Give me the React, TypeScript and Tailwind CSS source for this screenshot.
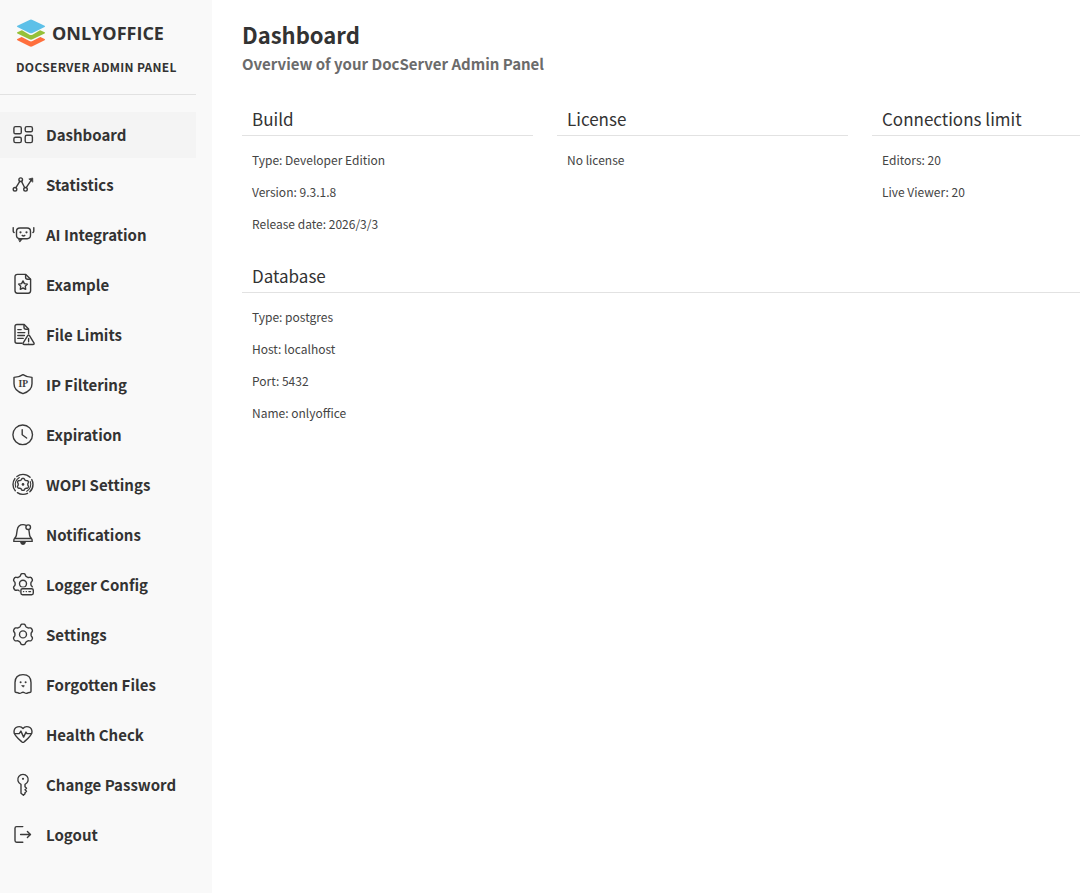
import type { ReactNode } from "react";

function Icon({ children }: { children: ReactNode }) {
  return (
    <svg
      viewBox="0 0 24 24"
      className="size-6 shrink-0 text-[#3a3a3a]"
      fill="none"
      stroke="currentColor"
      strokeWidth="1.4"
      strokeLinecap="round"
      strokeLinejoin="round"
      aria-hidden="true"
    >
      {children}
    </svg>
  );
}

// Closed outline of a six-lobed gear; depth is the height of a lobe above the mean radius.
function gear(cx: number, cy: number, radius: number, depth: number) {
  const points = Array.from({ length: 96 }, (_, i) => {
    const a = (i / 96) * Math.PI * 2;
    const wave = Math.tanh(1.8 * Math.cos(6 * a)) / Math.tanh(1.8);
    const r = radius + depth * wave;
    return `${(cx + r * Math.sin(a)).toFixed(2)} ${(cy - r * Math.cos(a)).toFixed(2)}`;
  });
  return `M${points.join("L")}Z`;
}

const items: { label: string; icon: ReactNode }[] = [
  {
    label: "Dashboard",
    icon: (
      <>
        <rect x="2.9" y="3.6" width="7.4" height="7.2" rx="1.6" />
        <rect x="14.2" y="3.6" width="7.2" height="5.2" rx="1.6" />
        <rect x="2.9" y="14.2" width="7.4" height="5.4" rx="1.6" />
        <rect x="14.2" y="12.3" width="7.2" height="7.3" rx="1.6" />
      </>
    ),
  },
  {
    label: "Statistics",
    icon: (
      <>
        <circle cx="4" cy="16.3" r="1.8" />
        <circle cx="9.7" cy="6.7" r="1.8" />
        <circle cx="14.5" cy="16.3" r="1.8" />
        <path d="M4.9 14.7 8.8 8.3M10.5 8.4l3.2 6.3M15.2 14.6 20.6 6.6" />
        <path d="M18.2 5.9 21.7 5l.1 3.8z" fill="currentColor" strokeWidth="0.8" />
      </>
    ),
  },
  {
    label: "AI Integration",
    icon: (
      <>
        <rect x="5.5" y="5" width="14" height="10.7" rx="3.4" />
        <path d="M7.9 16.2h3.2L9 18.8z" fill="currentColor" strokeWidth="0.8" />
        <path d="M2.2 4.6v3.6q.1 1 .9 1.3M22.8 4.6v3.6q-.1 1-.9 1.3" />
        <path d="M11.2 12.4q1.3 1.1 2.6 0" />
        <circle cx="9.5" cy="9.3" r="1.1" fill="currentColor" stroke="none" />
        <circle cx="15.5" cy="9.3" r="1.1" fill="currentColor" stroke="none" />
      </>
    ),
  },
  {
    label: "Example",
    icon: (
      <>
        <path d="M6.4 1.4h8.4l4.8 4.8v11.6q0 2.4-2.4 2.4H6.4Q4 20.2 4 17.8v-14q0-2.4 2.4-2.4z" />
        <path d="M14.6 1.6v2.6q0 2 2 2h2.8" />
        <path d="m12 7.9 1.4 2.7 3 .5-2.1 2.2.4 3-2.7-1.3-2.7 1.3.4-3-2.1-2.2 3-.5z" />
      </>
    ),
  },
  {
    label: "File Limits",
    icon: (
      <>
        <path d="M11 20.3H6q-2 0-2-2V3.5q0-2 2-2h7.2L17.6 6v4.6" />
        <path d="M13 1.7v2.5q0 2 2 2h2.4M6.8 6.6h3.4M6.8 9.6h7M6.8 12.5h6.6M6.8 15.4h5.4" />
        <path d="M16.7 12.6q.9-1.3 1.8 0l4.4 7.2q.7 1.6-1 1.7h-8.7q-1.6-.1-1-1.7zM17.6 15.4v3" />
        <circle cx="17.6" cy="20" r="0.6" fill="currentColor" stroke="none" />
      </>
    ),
  },
  {
    label: "IP Filtering",
    icon: (
      <>
        <path d="M12 1.6q4 2.7 9 2.8v6.4q0 7-9 9.9-9-2.9-9-9.9V4.4q5-.1 9-2.8z" />
        <text
          x="12.2"
          y="14"
          textAnchor="middle"
          fontSize="9.5"
          fontWeight="700"
          fontFamily="Liberation Serif, serif"
          fill="currentColor"
          stroke="none"
        >
          IP
        </text>
      </>
    ),
  },
  {
    label: "Expiration",
    icon: (
      <>
        <circle cx="11.7" cy="11.8" r="9.8" />
        <path d="M11.2 6.6v5.2l4.4 3.2" />
      </>
    ),
  },
  {
    label: "WOPI Settings",
    icon: (
      <>
        <circle
          cx="12"
          cy="11.4"
          r="10"
          pathLength="100"
          strokeDasharray="21 4.5 17 4.5 21 4.5 23 4.5"
          strokeDashoffset="8"
        />
        <path d="M4.7 14.2a7.9 7.9 0 0 1 3.6-9.7M19.3 8.6a7.9 7.9 0 0 1-3.6 9.7" strokeWidth="1.1" />
        <path d={gear(12, 11.4, 5.4, 0.6)} />
        <circle cx="12" cy="11.4" r="1.3" fill="currentColor" stroke="none" />
      </>
    ),
  },
  {
    label: "Notifications",
    icon: (
      <>
        <path d="M14.8 2.3Q13.8 1.6 12 1.6 7 1.6 6.2 7l-.8 5.2q-.2 1.6-1.6 2.9-1.2 1.2-1 3.3h18.4q.2-2.1-1-3.3-1.4-1.3-1.6-2.9L17.9 7M3.6 15.5h16.8" />
        <circle cx="17.2" cy="4.2" r="2.3" />
        <path d="M9.8 19.2q.3 2 2.2 2t2.2-2z" fill="currentColor" />
      </>
    ),
  },
  {
    label: "Logger Config",
    icon: (
      <>
        <path d={gear(12, 10.8, 9.1, 1.2)} />
        <circle cx="12" cy="10.8" r="3.5" />
        <rect x="8.6" y="14.4" width="15.4" height="8.6" fill="#f9f9f9" stroke="none" />
        <rect x="9.9" y="15.7" width="12.4" height="6" rx="1.6" />
        <path d="M12.5 18.6h.2M15.2 18.6h.2M17.9 18.6h1.6" />
      </>
    ),
  },
  {
    label: "Settings",
    icon: (
      <>
        <path d={gear(12, 11.4, 9.2, 1.1)} />
        <circle cx="12" cy="11.4" r="3.5" />
      </>
    ),
  },
  {
    label: "Forgotten Files",
    icon: (
      <>
        <path d="M4 18.2V9.6C4 4.2 7.4 1.6 12 1.6s8 2.6 8 8v8.6q-.1 1.5-1.6 1.3c-1.3-.2-1.7.9-3.1.9-1.5 0-1.9-1.2-3.3-1.2s-1.8 1.2-3.3 1.2c-1.4 0-1.8-1.1-3.1-.9Q4.1 19.7 4 18.2z" />
        <circle cx="9.6" cy="9.3" r="1" fill="currentColor" stroke="none" />
        <circle cx="14.6" cy="9.3" r="1" fill="currentColor" stroke="none" />
        <path d="M11 12.6h2.3q-.1 1.4-1.1 1.4T11 12.6z" fill="currentColor" strokeWidth="0.6" />
      </>
    ),
  },
  {
    label: "Health Check",
    icon: (
      <>
        <path d="M12 5.5C9.6 2.4 3 3 3 9c0 3.2 3 5.6 8 10q1 .8 2 0c5-4.4 8-6.8 8-10 0-6-6.6-6.6-9-3.5z" />
        <path d="M3.4 10.6h4.8l1.7-2.5 2.7 6 2.4-5 1 1.5h4.6" />
      </>
    ),
  },
  {
    label: "Change Password",
    icon: (
      <>
        <path d="M10 11.4a5.2 5.2 0 1 1 4 0v2.4l1.5 1.5-1.5 1.5 1.5 1.5-1.5 1.5v.9l-1.6 1.5L10 20.3z" />
        <circle cx="12" cy="5.8" r="1.1" fill="currentColor" stroke="none" />
      </>
    ),
  },
  {
    label: "Logout",
    icon: (
      <path d="M11.8 3.6H5.6Q4 3.600 4 5.200v12.400q0 1.600 1.600 1.600h6.200M9.600 11.500h9.800M16.400 8.400l3.100 3.100-3.100 3.100" />
    ),
  },
];

function Section({ title, rows, wide }: { title: string; rows: string[]; wide?: boolean }) {
  return (
    <section className={wide ? "col-span-3" : ""}>
      <h2 className="border-b border-[#e2e2e2] px-[10px] pb-1 text-[17px] leading-6 text-[#333333]">{title}</h2>
      <div className="flex flex-col gap-3 px-[10px] pt-[14px] text-[12px] leading-5 text-[#444444]">
        {rows.map((row) => (
          <p key={row}>{row}</p>
        ))}
      </div>
    </section>
  );
}

export default function App() {
  return (
    <div className="flex min-h-screen overflow-x-hidden bg-white font-['Noto_Sans_CJK_SC',sans-serif] text-[#333333]">
      <aside className="w-[212px] shrink-0 bg-[#f9f9f9] pr-4">
        <header className="border-b border-[#e2e2e2] px-4 pt-[18px] pb-[17px]">
          <div className="flex items-center gap-[6px]">
            <svg viewBox="0 0 30 30" className="size-[30px]" aria-hidden="true">
              <path d="M1.4 21 15 14.5 28.6 21q1 .6 0 1.2L16.5 28.3q-1.5.8-3 0L1.4 22.2q-1-.6 0-1.2z" fill="#ff6f3d" />
              <path d="M1.4 15.6 15 9.3l13.6 6.3q1 .6 0 1.2l-12.1 6.3q-1.5.8-3 0L1.4 16.8q-1-.6 0-1.2z" fill="#f9f9f9" />
              <path d="M1.4 14.2 15 7.9l13.6 6.3q1 .6 0 1.2l-12.1 5.9q-1.5.8-3 0L1.4 15.4q-1-.6 0-1.2z" fill="#95c038" />
              <path d="M1.4 9.4h27.2L16.5 16.7q-1.5.8-3 0z" fill="#f9f9f9" />
              <path d="M1.4 7.8 13.5 1.9q1.5-.7 3 0l12.1 5.9q1 .6 0 1.2l-12.1 6q-1.5.7-3 0L1.4 9q-1-.6 0-1.2z" fill="#5dc0e8" />
            </svg>
            <span className="font-['Open_Sans',sans-serif] text-[18px] leading-[30px] font-bold">ONLYOFFICE</span>
          </div>
          <p className="mt-[9px] text-[12px] leading-5 font-bold tracking-wide">DOCSERVER ADMIN PANEL</p>
        </header>
        <nav aria-label="Main" className="flex flex-col gap-1 pt-[17px]">
          {items.map(({ label, icon }, i) => (
            <a
              key={label}
              href="#"
              aria-current={i === 0 ? "page" : undefined}
              className={
                i === 0
                  ? "flex h-[46px] items-center gap-[11px] bg-[#f4f4f4] pl-[11px] text-[15px] font-bold"
                  : "flex h-[46px] items-center gap-[11px] pl-[11px] text-[15px] font-bold"
              }
            >
              <Icon>{icon}</Icon>
              <span className="whitespace-nowrap">{label}</span>
            </a>
          ))}
        </nav>
      </aside>
      <main className="min-w-0 flex-1 pt-[19px] pl-[30px]">
        <h1 className="text-[22px] leading-[30px] font-bold">Dashboard</h1>
        <p className="mt-[5px] text-[15px] leading-5 font-bold text-[#6b6b6b]">
          Overview of your DocServer Admin Panel
        </p>
        <div className="mt-[33px] grid grid-cols-[repeat(3,minmax(291px,1fr))] gap-x-6 gap-y-[30px]">
          <Section title="Build" rows={["Type: Developer Edition", "Version: 9.3.1.8", "Release date: 2026/3/3"]} />
          <Section title="License" rows={["No license"]} />
          <Section title="Connections limit" rows={["Editors: 20", "Live Viewer: 20"]} />
          <Section
            wide
            title="Database"
            rows={["Type: postgres", "Host: localhost", "Port: 5432", "Name: onlyoffice"]}
          />
        </div>
      </main>
    </div>
  );
}
